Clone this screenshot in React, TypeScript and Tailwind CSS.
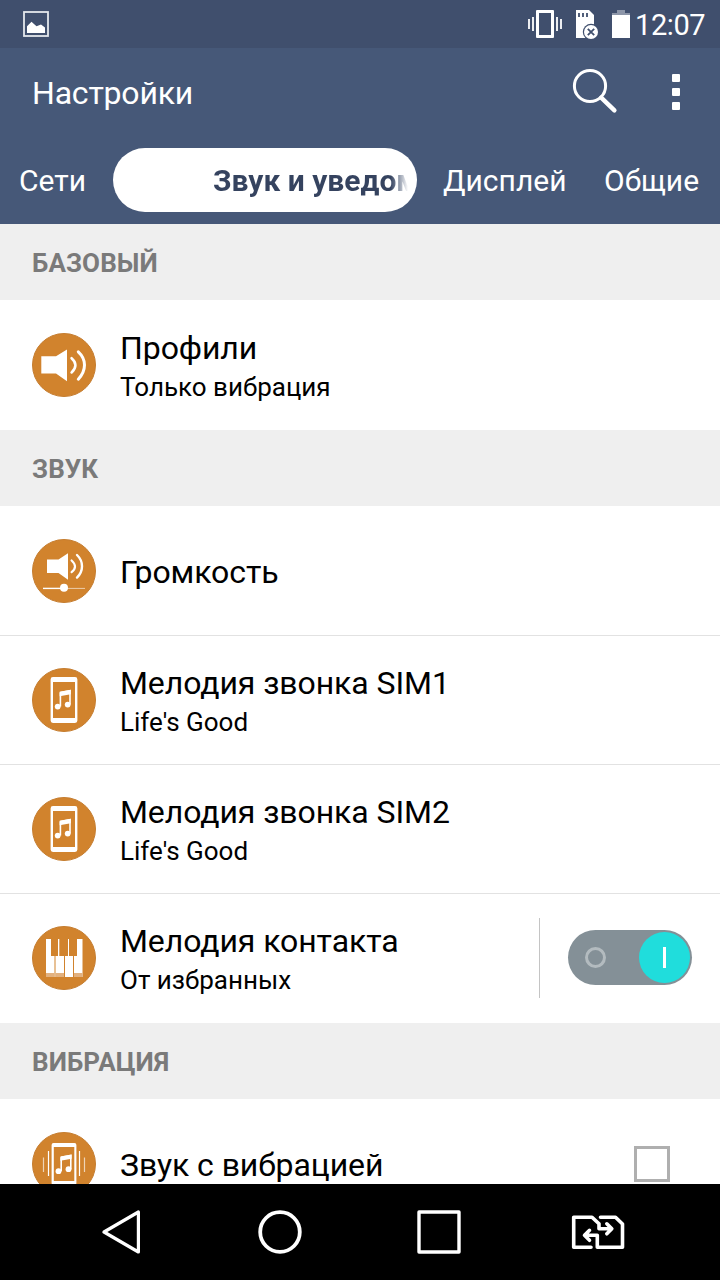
import type { ReactNode } from "react";

function Disc({ children }: { children: ReactNode }) {
  return (
    <svg className="size-16 shrink-0" viewBox="0 0 64 64" fill="none">
      <circle cx="32" cy="32" r="31.5" fill="#d1832d" stroke="#c57d30" strokeWidth="1" />
      {children}
    </svg>
  );
}

function ProfileIcon() {
  return (
    <Disc>
      <path d="M9.3 23.2H24L35 16.4V48.2L24 40.5H9.3Z" fill="#fff" />
      <path d="M39.6 25.2Q43.4 28.5 43.4 32.3T39.6 39.4" stroke="#fff" strokeWidth="2.6" strokeLinecap="round" />
      <path d="M46.3 18.8Q52.5 24.5 52.5 32T46.3 46.2" stroke="#fff" strokeWidth="3" strokeLinecap="round" />
    </Disc>
  );
}

function VolumeIcon() {
  return (
    <Disc>
      <path d="M15 20.4H26.5L36 14.2V40.8L26.5 34H15Z" fill="#fff" />
      <path d="M39.6 21.5Q43 24.5 43 27.6T39.6 33.2" stroke="#fff" strokeWidth="2.2" strokeLinecap="round" />
      <path d="M45 16Q50 20.8 50 27.2T45 38.6" stroke="#fff" strokeWidth="2.4" strokeLinecap="round" />
      <path d="M11 49.4H32" stroke="#fff" strokeWidth="1.4" />
      <path d="M32 49.4H53" stroke="#fff" strokeOpacity=".6" strokeWidth="1" />
      <circle cx="32" cy="48.8" r="4" fill="#fff" />
    </Disc>
  );
}

function Note() {
  return (
    <>
      <path d="M28.4 24.6L38 22.8V36.6M28.4 24.6V38.6" stroke="#fff" strokeWidth="1.6" />
      <path d="M27.6 23.8L38.8 21.8V26.2L27.6 28.2Z" fill="#fff" />
      <circle cx="25.7" cy="38.6" r="2.9" fill="#fff" />
      <circle cx="35.7" cy="36.6" r="2.9" fill="#fff" />
    </>
  );
}

function RingtoneIcon() {
  return (
    <Disc>
      <path
        fillRule="evenodd"
        d="M21 9H43Q45.4 9 45.4 11.4V52.6Q45.4 55 43 55H21Q18.6 55 18.6 52.6V11.4Q18.6 9 21 9ZM21 14V50H43V14Z"
        fill="#fff"
      />
      <Note />
    </Disc>
  );
}

function VibrateSoundIcon() {
  return (
    <Disc>
      <path
        fillRule="evenodd"
        d="M21.5 11H42.5Q44.4 11 44.4 13V51Q44.4 53 42.5 53H21.5Q19.6 53 19.6 51V13Q19.6 11 21.5 11ZM21.8 15V49H42.3V15Z"
        fill="#fff"
      />
      <g transform="translate(.8 .6)"><Note /></g>
      <path d="M16.5 19V44M47.5 19V44" stroke="#fff" strokeWidth="1.2" />
      <path d="M11.5 25.5V40M52.5 25.5V40" stroke="#fff" strokeOpacity=".65" strokeWidth="1.2" />
    </Disc>
  );
}

function PianoIcon() {
  return (
    <Disc>
      <path
        d="M14 13H19V30H22.5V51H14ZM26 13H27.3V30H32V51H23.5V30H26ZM36 13H37V30H41V51H33V30H36ZM45 13H50.5V51H42V30H45Z"
        fill="#fff"
      />
      <path d="M14 47H22.5V51H14ZM23.5 47H32V51H23.5ZM42 47H50.5V51H42Z" fill="#e2b17f" />
    </Disc>
  );
}

function StatusBar() {
  return (
    <div className="flex h-12 shrink-0 items-center bg-[#404f6d] pl-[23px] pr-[14px] text-white">
      <svg className="h-[26px] w-[26px]" viewBox="0 0 26 26" fill="none">
        <rect x="1" y="1" width="24" height="24" stroke="#e4e7ec" strokeWidth="1.8" />
        <path d="M4 22V15.2L8.5 10.8L13.5 15.2L18 13.5L22 16.5V22Z" fill="#fff" />
      </svg>
      <svg className="ml-auto h-[30px] w-[34px]" viewBox="0 0 34 30" fill="none">
        <path fillRule="evenodd" d="M9 1H25Q26 1 26 2V28Q26 29 25 29H9Q8 29 8 28V2Q8 1 9 1ZM11 4V26H23V4Z" fill="#fff" />
        <path d="M1 10V20M5 8V22M29 8V22M33 10V20" stroke="#fff" strokeWidth="1.8" />
      </svg>
      <svg className="ml-[14px] h-[30px] w-6" viewBox="0 0 24 30" fill="none">
        <path d="M0 1H13L18 6V29H0Z" fill="#fff" />
        <path d="M3 4V8M7 4V8M11 4V8" stroke="#404f6d" strokeWidth="1.8" />
        <circle cx="15" cy="23" r="8.2" fill="#404f6d" />
        <circle cx="15" cy="23" r="7" fill="#fff" />
        <path d="M11.8 19.8L18.2 26.2M18.2 19.8L11.8 26.2" stroke="#404f6d" strokeWidth="1.8" />
      </svg>
      <svg className="ml-[12px] h-[30px] w-[18px]" viewBox="0 0 18 30">
        <path d="M5 1H13V4H18V7H0V4H5Z" fill="#8c95a8" />
        <path d="M0 6H18V29H0Z" fill="#fff" />
      </svg>
      <span className="ml-[5px] w-[71px] whitespace-nowrap pt-[2px] text-[29px] leading-[34px] tracking-[-0.4px]">12:07</span>
    </div>
  );
}

function Header() {
  return (
    <div className="flex h-[88px] shrink-0 items-center pl-8 pr-10 text-white">
      <h1 className="pt-[2px] text-[32px] leading-[38px] tracking-[-0.2px]">Настройки</h1>
      <svg className="ml-auto size-[48px]" viewBox="0 0 48 48" fill="none">
        <circle cx="20" cy="18" r="15.6" stroke="#fff" strokeWidth="3" />
        <path d="M31.2 29.6L44.4 42.4" stroke="#fff" strokeWidth="4.4" strokeLinecap="round" />
      </svg>
      <div className="ml-[54px] flex flex-col gap-[6px]">
        <i className="size-2 rounded-[1px] bg-white" />
        <i className="size-2 rounded-[1px] bg-white" />
        <i className="size-2 rounded-[1px] bg-white" />
      </div>
    </div>
  );
}

function Tabs() {
  return (
    <div className="flex h-[88px] shrink-0 items-center pl-[19px] text-[30px] leading-9 text-white">
      <span className="w-[94px] pt-[2px]">Сети</span>
      <div className="flex h-16 w-[304px] items-center overflow-hidden rounded-full bg-white pl-[100px]">
        <span className="w-[195px] overflow-hidden whitespace-nowrap bg-gradient-to-r from-[#35435f] from-[91%] to-white bg-clip-text pt-[2px] font-bold text-transparent">
          Звук и уведом
        </span>
      </div>
      <span className="ml-[26px] w-[161px] pt-[2px]">Дисплей</span>
      <span className="pt-[2px]">Общие</span>
    </div>
  );
}

function Section({ children }: { children: ReactNode }) {
  return (
    <h2 className="h-[76px] shrink-0 bg-[#efefef] pl-8 pt-[20px] text-[26px] font-bold leading-[38px] tracking-[0.1px] text-[#7a7a7a]">
      {children}
    </h2>
  );
}

type RowProps = { icon: ReactNode; title: string; sub?: string; line?: boolean; tall?: boolean; children?: ReactNode };

function Row({ icon, title, sub, line, tall, children }: RowProps) {
  return (
    <div
      className={`flex shrink-0 items-center gap-6 pl-8 ${tall ? "h-[130px]" : "h-[129px]"} ${
        line ? "border-b border-[#e2e2e2]" : tall ? "" : "pb-px"
      }`}
    >
      {icon}
      <div className={`flex-1 whitespace-nowrap text-black ${sub ? "pt-[5px]" : "pt-[2px]"}`}>
        <div className="text-[32px] leading-[38px] tracking-[-0.08px]">{title}</div>
        {sub && <div className="pt-px text-[26px] leading-[38px]">{sub}</div>}
      </div>
      {children}
    </div>
  );
}

function Toggle() {
  return (
    <div className="mr-7 flex items-center">
      <div className="h-20 w-px bg-[#c4c4c4]" />
      <div className="mb-px ml-7 flex h-[55px] w-[124px] items-center rounded-full bg-[#849097] pl-[17px] pr-[2px]">
        <div className="size-[21px] rounded-full border-[3px] border-[#b3bbbf]" />
        <div className="ml-auto flex size-[51px] items-center justify-center rounded-full bg-[#20dddc]">
          <div className="h-[21px] w-[3px] bg-white" />
        </div>
      </div>
    </div>
  );
}

function NavBar() {
  return (
    <div className="flex h-24 shrink-0 items-center bg-black">
      <svg className="ml-[100px] size-11" viewBox="0 0 44 44" fill="none">
        <path d="M38.4 2V42L4 22Z" stroke="#fff" strokeWidth="3.2" strokeLinejoin="round" />
      </svg>
      <svg className="ml-[114px] size-11" viewBox="0 0 44 44" fill="none">
        <circle cx="22" cy="22" r="19.8" stroke="#fff" strokeWidth="3.8" />
      </svg>
      <svg className="ml-[115px] size-11" viewBox="0 0 44 44" fill="none">
        <rect x="2" y="2" width="40" height="40" stroke="#fff" strokeWidth="3.4" strokeLinejoin="round" />
      </svg>
      <svg className="ml-[110px] h-[36px] w-[54px]" viewBox="0 0 54 36" fill="none" stroke="#fff" strokeWidth="3.6" strokeLinecap="round" strokeLinejoin="round">
        <path d="M20 33.2H2.7V3.2H21L28 9.8V14.8H40.5M35.8 9.8L40.8 14.8L35.8 19.8" />
        <path d="M29.5 3.2H44.5L51.5 10V33.2H26.3V21.3H13.8M18.5 16.3L13.5 21.3L18.5 26.3" />
      </svg>
    </div>
  );
}

export default function App() {
  return (
    <div className="flex h-[1280px] w-[720px] flex-col overflow-hidden bg-white font-[Roboto,sans-serif]">
      <StatusBar />
      <div className="shrink-0 bg-[#465878]">
        <Header />
        <Tabs />
      </div>
      <div className="flex min-h-0 flex-1 flex-col overflow-hidden">
        <Section>БАЗОВЫЙ</Section>
        <Row icon={<ProfileIcon />} title="Профили" sub="Только вибрация" tall />
        <Section>ЗВУК</Section>
        <Row icon={<VolumeIcon />} title="Громкость" line tall />
        <Row icon={<RingtoneIcon />} title="Мелодия звонка SIM1" sub="Life's Good" line />
        <Row icon={<RingtoneIcon />} title="Мелодия звонка SIM2" sub="Life's Good" line />
        <Row icon={<PianoIcon />} title="Мелодия контакта" sub="От избранных">
          <Toggle />
        </Row>
        <Section>ВИБРАЦИЯ</Section>
        <Row icon={<VibrateSoundIcon />} title="Звук с вибрацией" tall>
          <div className="mr-[50px] size-9 border-[3px] border-[#afafaf]" />
        </Row>
      </div>
      <NavBar />
    </div>
  );
}
